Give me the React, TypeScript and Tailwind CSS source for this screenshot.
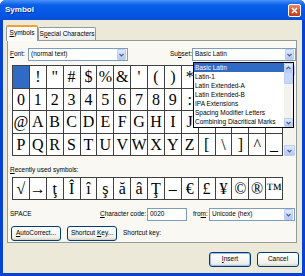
import React from "react";

const UI = "font-['Liberation_Sans',Arial,sans-serif] text-[6.5px] leading-none text-black";
const SERIF = "font-['Liberation_Serif','Times_New_Roman',serif]";

const rows: string[][] = [
    [" ", "!", '"', "#", "$", "%", "&", "'", "(", ")", "*", "+", ",", "-", ".", "/"],
    ["0", "1", "2", "3", "4", "5", "6", "7", "8", "9", ":", ";", "<", "=", ">", "?"],
    ["@", "A", "B", "C", "D", "E", "F", "G", "H", "I", "J", "K", "L", "M", "N", "O"],
    ["P", "Q", "R", "S", "T", "U", "V", "W", "X", "Y", "Z", "[", "\\", "]", "^", "_"],
];
const rowHeights = ["h-[23px]", "h-[22px]", "h-[23px]", "h-[22px]"];

const recent = ["√", "→", "ţ", "Î", "î", "ş", "ă", "â", "Ţ", "–", "€", "£", "¥", "©", "®", "™"];

const subsets = [
    "Basic Latin",
    "Latin-1",
    "Latin Extended-A",
    "Latin Extended-B",
    "IPA Extensions",
    "Spacing Modifier Letters",
    "Combining Diacritical Marks",
];

// cells sitting under the open subset list are not drawn
const hidden = (r: number, c: number) => r < 3 && c > 10;

// small chevron used by combo boxes and scroll arrows
function Chevron({ up }: { up?: boolean }) {
    return (
        <svg width="5" height="4" viewBox="0 0 5 4">
            <path d={up ? "M0.5 3 L2.5 1 L4.5 3" : "M0.5 1 L2.5 3 L4.5 1"} fill="none" stroke="#4D6185" strokeWidth="1.2" />
        </svg>
    );
}

function ArrowBtn({ up, className }: { up?: boolean; className: string }) {
    return (
        <span className={`flex items-center justify-center rounded-[1px] border border-[#B9CCF5] bg-[linear-gradient(to_bottom,#E1EAFE,#B4C8F6)] ${className}`}>
            <Chevron up={up} />
        </span>
    );
}

function Combo({ value, className }: { value: string; className: string }) {
    return (
        <div className={`flex h-[13px] items-center border border-[#7F9DB9] bg-white ${className}`}>
            <span className="flex-1 truncate pl-[2px]">{value}</span>
            <ArrowBtn className="mr-px h-[11px] w-[9px]" />
        </div>
    );
}

function XpButton({ children, className }: { children: React.ReactNode; className: string }) {
    return (
        <div className={`flex h-[15px] items-center justify-center rounded-[3px] border border-[#003C74] bg-[linear-gradient(to_bottom,#FFFFFF,#F0F0EA_80%,#D6D0C5)] ${className}`}>
            {children}
        </div>
    );
}

export default function App() {
    return (
        <div className={`${UI} flex h-[276px] w-[305px] flex-col overflow-hidden rounded-t-[6px] bg-[#0842D0]`}>
            {/* Title bar */}
            <div className="flex h-[20px] shrink-0 items-center justify-between bg-[linear-gradient(to_bottom,#4A93F8,#0A5FE8_25%,#0457E6_70%,#0A4ED6)] pl-[5px] pr-[4px]">
                <span className="text-[8px] font-bold text-white [text-shadow:1px_1px_0_#0A2A8A]">Symbol</span>
                <span className="flex h-[13px] w-[13px] items-center justify-center rounded-[2px] border border-white bg-[linear-gradient(to_bottom,#E98A6A,#D9532E_50%,#C43C17)]">
                    <svg width="7" height="7" viewBox="0 0 7 7">
                        <path d="M1 1 L6 6 M6 1 L1 6" stroke="white" strokeWidth="1.6" />
                    </svg>
                </span>
            </div>

            {/* Dialog body */}
            <div className="mx-[3px] mb-[3px] flex flex-1 flex-col bg-[#ECE9D8] pt-[5px]">
                {/* Tabs */}
                <div className="flex h-[15px] items-end pl-[3px]">
                    <div className="relative z-10 -mb-px flex h-[16px] w-[32px] items-center justify-center rounded-t-[2px] border-x border-t-2 border-x-[#919B9C] border-t-[#F0A030] bg-[#FBFBF8] pb-px">
                        <span><u>S</u>ymbols</span>
                    </div>
                    <div className="flex h-[13px] w-[58px] items-center justify-center rounded-t-[2px] border-x border-t border-[#919B9C] bg-[linear-gradient(to_bottom,#FFFFFF,#ECEBE6)]">
                        <span>S<u>p</u>ecial Characters</span>
                    </div>
                </div>

                {/* Tab panel */}
                <div className="ml-[4px] flex h-[203px] w-[290px] flex-col border border-[#919B9C] bg-[#F9F8F3]">
                    {/* Font / Subset */}
                    <div className="mt-[7px] flex h-[13px] items-center">
                        <span className="w-[20px] pl-[2px]"><u>F</u>ont:</span>
                        <Combo value="(normal text)" className="w-[100px]" />
                        <span className="ml-[42px] w-[22px]">Su<u>b</u>set:</span>
                        <div className="relative z-20">
                            <Combo value="Basic Latin" className="w-[104px]" />
                            {/* open list */}
                            <div className="absolute left-[1px] top-[14px] flex h-[66px] w-[101px] border border-black bg-white">
                                <div className="flex flex-1 flex-col">
                                    {subsets.map((s, i) => (
                                        <div
                                            key={s}
                                            className={`h-[9px] truncate pl-px leading-[9px] ${i === 0 ? "bg-[#316AC5] text-white" : ""}`}
                                        >
                                            {s}
                                        </div>
                                    ))}
                                </div>
                                <div className="flex w-[9px] flex-col bg-[#F3F2EE]">
                                    <ArrowBtn up className="h-[9px] w-[9px]" />
                                    <span className="h-[12px] rounded-[1px] border border-[#B9CCF5] bg-[#C8D6FA]" />
                                    <span className="flex-1" />
                                    <ArrowBtn className="h-[9px] w-[9px]" />
                                </div>
                            </div>
                        </div>
                    </div>

                    {/* Character grid */}
                    <div className="mt-[4px] flex">
                        <div className="ml-[4px] w-[271px] border-l border-t border-[#404040]">
                            {rows.map((row, r) => (
                                <div key={r} className="grid grid-cols-[repeat(16,minmax(0,1fr))]">
                                    {row.map((ch, c) => (
                                        <div
                                            key={c}
                                            className={`${rowHeights[r]} ${SERIF} flex items-center justify-center border-b border-r border-[#404040] text-[16px] ${r === 0 && c === 0 ? "bg-[#316AC5]" : "bg-white"}`}
                                        >
                                            {hidden(r, c) ? "" : ch}
                                        </div>
                                    ))}
                                </div>
                            ))}
                        </div>
                        <div className="ml-px flex w-[11px] flex-col bg-[#F4F3EF]">
                            <ArrowBtn up className="h-[11px] w-[11px]" />
                            <span className="flex-1" />
                            <ArrowBtn className="h-[11px] w-[11px]" />
                        </div>
                    </div>

                    {/* Recently used */}
                    <span className="mt-[10px] h-[8px] pl-[2px] leading-[8px]"><u>R</u>ecently used symbols:</span>
                    <div className="ml-[4px] mt-[3px] grid w-[271px] grid-cols-[repeat(16,minmax(0,1fr))] border-l border-t border-[#404040]">
                        {recent.map((ch, i) => (
                            <div key={i} className={`${SERIF} flex h-[22px] items-center justify-center border-b border-r border-[#404040] bg-white text-[16px]`}>
                                {ch}
                            </div>
                        ))}
                    </div>

                    {/* Character code row */}
                    <div className="mt-[8px] flex h-[13px] items-center">
                        <span className="w-[92px] pl-[2px]">SPACE</span>
                        <span className="w-[47px]"><u>C</u>haracter code:</span>
                        <div className="flex h-[13px] w-[40px] items-center border border-[#7F9DB9] bg-white pl-[2px]">0020</div>
                        <span className="ml-[6px] w-[16px]">fro<u>m</u>:</span>
                        <Combo value="Unicode (hex)" className="w-[86px]" />
                    </div>

                    {/* Buttons */}
                    <div className="mt-[5px] flex items-center">
                        <XpButton className="ml-[3px] w-[50px]"><span><u>A</u>utoCorrect...</span></XpButton>
                        <XpButton className="ml-[6px] w-[50px]"><span>Shortcut <u>K</u>ey...</span></XpButton>
                        <span className="ml-[6px]">Shortcut key:</span>
                    </div>
                </div>

                {/* Dialog buttons */}
                <div className="mt-[9px] flex justify-end gap-[6px] pr-[3px]">
                    <XpButton className="w-[42px] shadow-[inset_0_0_0_1px_#9DBAF0]"><span><u>I</u>nsert</span></XpButton>
                    <XpButton className="w-[42px]"><span>Cancel</span></XpButton>
                </div>
            </div>
        </div>
    );
}
